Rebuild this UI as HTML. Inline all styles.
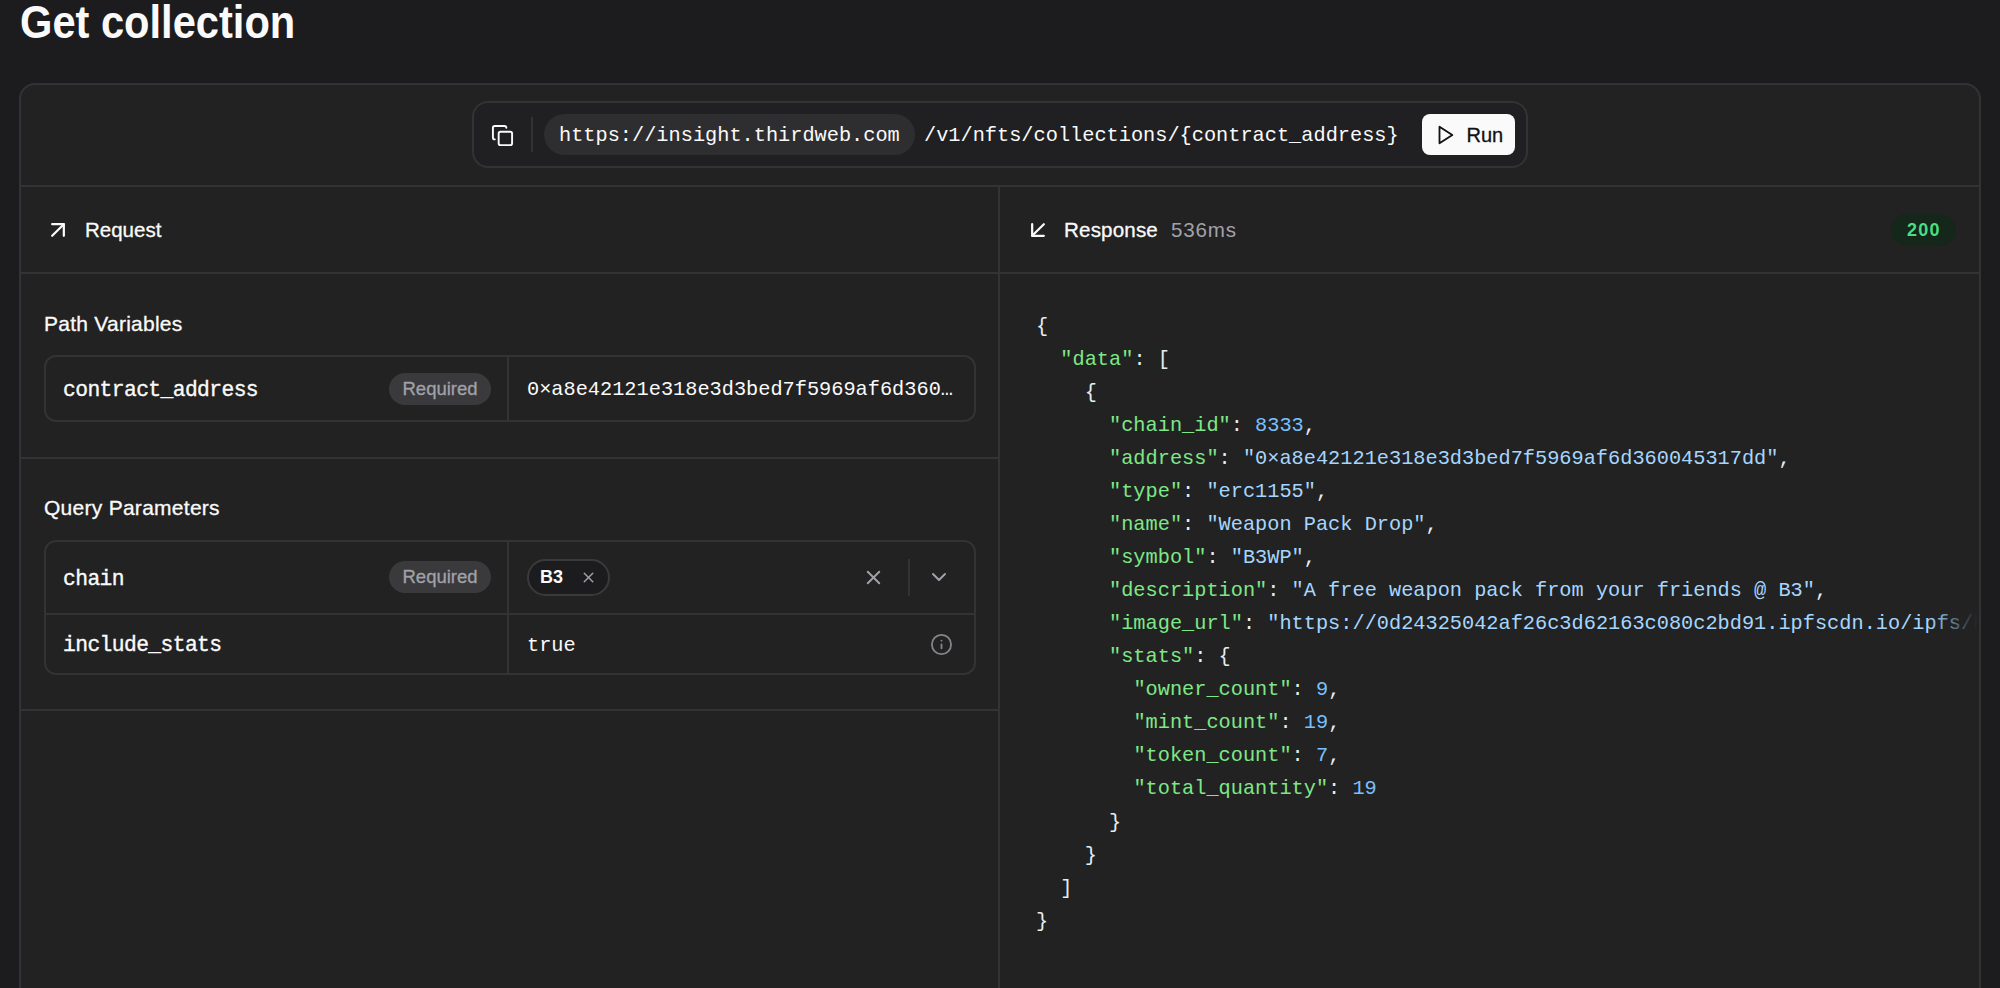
<!DOCTYPE html>
<html><head><meta charset="utf-8">
<style>
*{box-sizing:border-box;margin:0;padding:0}
html,body{width:2000px;height:988px;overflow:hidden;background:#1c1c1e;font-family:"Liberation Sans",sans-serif;color:#fafafa}
.abs{position:absolute}
.mono{font-family:"Liberation Mono",monospace;font-size:20.3px;white-space:pre}
#title{left:19.8px;top:0px;font-size:46px;font-weight:700;line-height:44px;white-space:nowrap;transform:scaleX(0.905);transform-origin:0 0}
#card{left:19px;top:83px;width:1962px;height:1000px;border:2px solid #333335;border-radius:16px;background:#222222}
.hl{height:2px;background:#333335}
.vl{width:2px;background:#333335}
#urlbar{left:472px;top:101px;width:1056px;height:66.8px;border:2px solid #333335;border-radius:16px;background:#202022}
#host{left:544px;top:114.3px;width:371px;height:40.7px;border-radius:21px;background:#2e2e30}
#run{left:1422.4px;top:114px;width:93px;height:41px;border-radius:8px;background:#fafafa;color:#111}
.lbl{font-size:20px;white-space:nowrap}
.med{-webkit-text-stroke:0.3px currentColor}
.pname{font-size:21.3px;letter-spacing:-0.59px;-webkit-text-stroke:0.35px #fafafa}
.tbl{border:2px solid #333335;border-radius:12px}
.pill{border-radius:16px;background:#3a3a3c;color:#a1a1aa;font-size:18px;white-space:nowrap}
.k{color:#7ee787}.s{color:#a5d6ff}.n{color:#79c0ff}.p{color:#e6edf3}
#json{left:36px;top:35.8px;line-height:33.05px;color:#e6edf3}
</style></head><body>
<div id="title" class="abs">Get collection</div>
<div id="card" class="abs"></div>
<!-- top bar -->
<div id="urlbar" class="abs"></div>
<svg class="abs" style="left:490.5px;top:123.5px" width="23" height="23" viewBox="0 0 24 24" fill="none" stroke="#fafafa" stroke-width="2" stroke-linecap="round" stroke-linejoin="round"><rect width="14" height="14" x="8" y="8" rx="2" ry="2"/><path d="M4 16c-1.1 0-2-.9-2-2V4c0-1.1.9-2 2-2h10c1.1 0 2 .9 2 2"/></svg>
<div class="abs vl" style="left:531px;top:117px;height:35px"></div>
<div id="host" class="abs"></div>
<div class="abs mono" style="left:559px;top:124px;line-height:24px">https://insight.thirdweb.com</div>
<div class="abs mono" style="left:924px;top:124px;line-height:24px">/v1/nfts/collections/{contract_address}</div>
<div id="run" class="abs"></div>
<svg class="abs" style="left:1434px;top:124px" width="22" height="22" viewBox="0 0 24 24" fill="none" stroke="#111" stroke-width="2" stroke-linecap="round" stroke-linejoin="round"><polygon points="6 3 20 12 6 21 6 3"/></svg>
<div class="abs lbl med" style="left:1466.5px;top:123px;font-size:20px;color:#111;line-height:24px">Run</div>
<div class="abs hl" style="left:21px;top:185px;width:1958px"></div>
<!-- columns -->
<div class="abs vl" style="left:998px;top:187px;height:801px"></div>
<div class="abs hl" style="left:21px;top:272px;width:1958px"></div>
<!-- request header -->
<svg class="abs" style="left:44px;top:215.5px" width="28" height="28" viewBox="0 0 24 24" fill="none" stroke="#fafafa" stroke-width="1.9" stroke-linecap="round" stroke-linejoin="round"><path d="M7 7h10v10"/><path d="M7 17 17 7"/></svg>
<div class="abs lbl med" style="left:85px;top:218px;line-height:24px;font-size:20.5px">Request</div>
<!-- response header -->
<svg class="abs" style="left:1023.6px;top:215.6px" width="28" height="28" viewBox="0 0 24 24" fill="none" stroke="#fafafa" stroke-width="1.9" stroke-linecap="round" stroke-linejoin="round"><path d="M17 7 7 17"/><path d="M17 17H7V7"/></svg>
<div class="abs lbl med" style="left:1064px;top:218px;line-height:24px;font-size:20.6px;letter-spacing:0.15px">Response</div>
<div class="abs lbl" style="left:1171px;top:218px;line-height:24px;font-size:20.6px;letter-spacing:0.8px;color:#a1a1aa">536ms</div>
<div class="abs" style="left:1891px;top:214px;width:65px;height:32px;border-radius:16px;background:#15261b"></div>
<div class="abs lbl" style="left:1907px;top:218px;line-height:24px;font-size:18px;font-weight:700;letter-spacing:1.3px;color:#4ade80">200</div>
<!-- path variables -->
<div class="abs lbl med" style="left:44px;top:311.7px;line-height:24px;font-size:21px;letter-spacing:0.25px">Path Variables</div>
<div class="abs tbl" style="left:44px;top:355px;width:932px;height:67px"></div>
<div class="abs vl" style="left:507px;top:357px;height:63px"></div>
<div class="abs mono pname" style="left:63px;top:377.6px;line-height:24px">contract_address</div>
<div class="abs pill" style="left:389px;top:373px;width:102px;height:32px"></div>
<div class="abs lbl med" style="left:402.5px;top:376.6px;line-height:24px;font-size:18.5px;color:#a1a1aa">Required</div>
<div class="abs mono" style="left:527px;top:378px;line-height:24px">0×a8e42121e318e3d3bed7f5969af6d360…</div>
<div class="abs hl" style="left:21px;top:457px;width:977px"></div>
<!-- query parameters -->
<div class="abs lbl med" style="left:44px;top:496px;line-height:24px;font-size:21px;letter-spacing:0.27px">Query Parameters</div>
<div class="abs tbl" style="left:44px;top:540px;width:932px;height:135px"></div>
<div class="abs vl" style="left:507px;top:542px;height:131px"></div>
<div class="abs hl" style="left:46px;top:613px;width:928px"></div>
<div class="abs mono pname" style="left:63px;top:567px;line-height:24px">chain</div>
<div class="abs pill" style="left:389px;top:561px;width:102px;height:32px"></div>
<div class="abs lbl med" style="left:402.5px;top:565px;line-height:24px;font-size:18.5px;color:#a1a1aa">Required</div>
<div class="abs" style="left:527px;top:559px;width:83px;height:37px;border:2px solid #3a3a3c;border-radius:19px;background:#1c1c1e"></div>
<div class="abs lbl" style="left:540px;top:565.1px;line-height:24px;font-size:18px;font-weight:700">B3</div>
<svg class="abs" style="left:580px;top:569px" width="17" height="17" viewBox="0 0 24 24" fill="none" stroke="#a1a1aa" stroke-width="2" stroke-linecap="round"><path d="M18 6 6 18"/><path d="m6 6 12 12"/></svg>
<svg class="abs" style="left:862px;top:566px" width="23" height="23" viewBox="0 0 24 24" fill="none" stroke="#a1a1aa" stroke-width="2" stroke-linecap="round"><path d="M18 6 6 18"/><path d="m6 6 12 12"/></svg>
<div class="abs vl" style="left:908px;top:559px;height:37px"></div>
<svg class="abs" style="left:927px;top:565px" width="24" height="24" viewBox="0 0 24 24" fill="none" stroke="#a1a1aa" stroke-width="2" stroke-linecap="round" stroke-linejoin="round"><path d="m6 9 6 6 6-6"/></svg>
<div class="abs mono pname" style="left:63px;top:633.3px;line-height:24px">include_stats</div>
<div class="abs mono" style="left:527px;top:634px;line-height:24px">true</div>
<svg class="abs" style="left:930.2px;top:632.7px" width="23" height="23" viewBox="0 0 24 24" fill="none" stroke="#85858d" stroke-width="1.9" stroke-linecap="round"><circle cx="12" cy="12" r="10"/><path d="M12 16v-4"/><path d="M12 8h.01"/></svg>
<div class="abs hl" style="left:21px;top:709px;width:977px"></div>
<!-- json -->
<div class="abs" style="left:1000px;top:274px;width:979px;height:714px;overflow:hidden"><div id="json" class="abs mono"><span class="p">{</span>
  <span class="k">"data"</span>: [
    {
      <span class="k">"chain_id"</span>: <span class="n">8333</span>,
      <span class="k">"address"</span>: <span class="s">"0×a8e42121e318e3d3bed7f5969af6d360045317dd"</span>,
      <span class="k">"type"</span>: <span class="s">"erc1155"</span>,
      <span class="k">"name"</span>: <span class="s">"Weapon Pack Drop"</span>,
      <span class="k">"symbol"</span>: <span class="s">"B3WP"</span>,
      <span class="k">"description"</span>: <span class="s">"A free weapon pack from your friends @ B3"</span>,
      <span class="k">"image_url"</span>: <span class="s">"https://0d24325042af26c3d62163c080c2bd91.ipfscdn.io/ipfs/bafybeih"</span>,
      <span class="k">"stats"</span>: {
        <span class="k">"owner_count"</span>: <span class="n">9</span>,
        <span class="k">"mint_count"</span>: <span class="n">19</span>,
        <span class="k">"token_count"</span>: <span class="n">7</span>,
        <span class="k">"total_quantity"</span>: <span class="n">19</span>
      }
    }
  ]
}</div></div>
<div class="abs" style="left:1928px;top:274px;width:51px;height:714px;background:linear-gradient(to right,rgba(34,34,34,0),#222222 96%)"></div>
</body></html>
